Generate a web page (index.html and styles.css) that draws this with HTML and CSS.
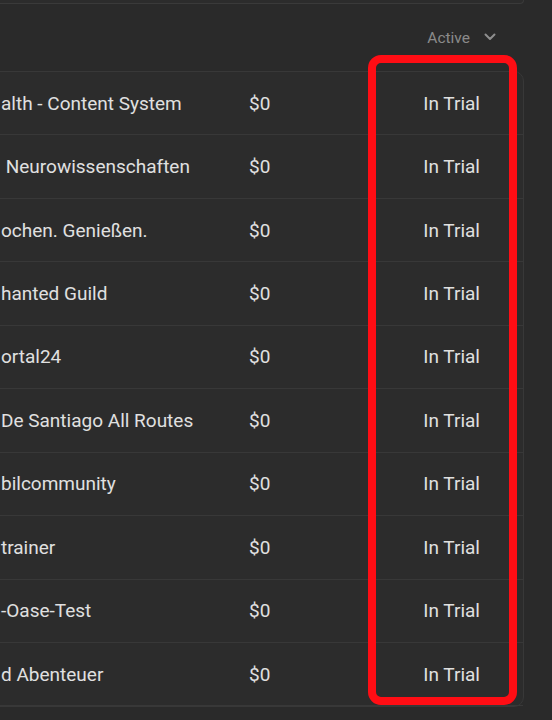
FILE: index.html
```html
<!DOCTYPE html>
<html>
<head>
<meta charset="utf-8">
<link rel="stylesheet" href="styles.css">
</head>
<body>
<div class="page">
  <div class="top-card"></div>
  <div class="filter-row">
    <button class="filter">Active
      <svg class="chev" width="14" height="14" viewBox="0 0 14 14"><path d="M2.5 4.5 L7 9 L11.5 4.5" fill="none" stroke="#8e8e8e" stroke-width="2" stroke-linecap="round" stroke-linejoin="round"/></svg>
    </button>
  </div>
  <div class="table-card">
    <div class="row"><span class="name">alth - Content System</span><span class="price">$0</span><span class="status">In Trial</span></div>
    <div class="row"><span class="name">&nbsp;Neurowissenschaften</span><span class="price">$0</span><span class="status">In Trial</span></div>
    <div class="row"><span class="name">ochen. Genießen.</span><span class="price">$0</span><span class="status">In Trial</span></div>
    <div class="row"><span class="name">hanted Guild</span><span class="price">$0</span><span class="status">In Trial</span></div>
    <div class="row"><span class="name">ortal24</span><span class="price">$0</span><span class="status">In Trial</span></div>
    <div class="row"><span class="name">De Santiago All Routes</span><span class="price">$0</span><span class="status">In Trial</span></div>
    <div class="row"><span class="name">bilcommunity</span><span class="price">$0</span><span class="status">In Trial</span></div>
    <div class="row"><span class="name">trainer</span><span class="price">$0</span><span class="status">In Trial</span></div>
    <div class="row"><span class="name">-Oase-Test</span><span class="price">$0</span><span class="status">In Trial</span></div>
    <div class="row"><span class="name">d Abenteuer</span><span class="price">$0</span><span class="status">In Trial</span></div>
  </div>
  <div class="highlight"></div>
</div>
</body>
</html>
```

FILE: styles.css
```css
html, body {
  margin: 0;
  padding: 0;
  background: #2a2a2a;
  overflow: hidden;
}
body {
  width: 552px;
  height: 720px;
  font-family: Roboto, "Noto Sans", sans-serif;
}
.page {
  position: relative;
  width: 524px;
  height: 720px;
}
.top-card {
  margin-left: -20px;
  height: 3px;
  border: 1px solid #3a3a3a;
  border-top: none;
  border-radius: 0 0 10px 0;
  background: #2c2c2c;
}
.filter-row {
  height: 67px;
  display: flex;
  align-items: center;
  justify-content: flex-end;
  padding-right: 27px;
  box-sizing: border-box;
}
.filter {
  background: none;
  border: none;
  padding: 0;
  display: flex;
  align-items: center;
  gap: 13px;
  color: #8a8a8a;
  font-family: Roboto, "Noto Sans", sans-serif;
  font-size: 15.5px;
}
.chev {
  margin-top: -2px;
}
.table-card {
  margin-left: -20px;
  border: 1px solid #383838;
  border-radius: 0 10px 10px 0;
  background: #2c2c2c;
}
.row {
  display: grid;
  grid-template-columns: 268px 100px 1fr;
  align-items: center;
  height: 63.44px;
  box-sizing: border-box;
  border-bottom: 1px solid #383838;
  padding-right: 43px;
  font-size: 19px;
  color: #e0e0e0;
}
.name {
  padding-left: 20px;
  white-space: nowrap;
}
.status {
  text-align: right;
}
.highlight {
  position: absolute;
  left: 368px;
  top: 55px;
  width: 149px;
  height: 650px;
  box-sizing: border-box;
  border: 8px solid #ff0d14;
  border-radius: 13px;
}
```
